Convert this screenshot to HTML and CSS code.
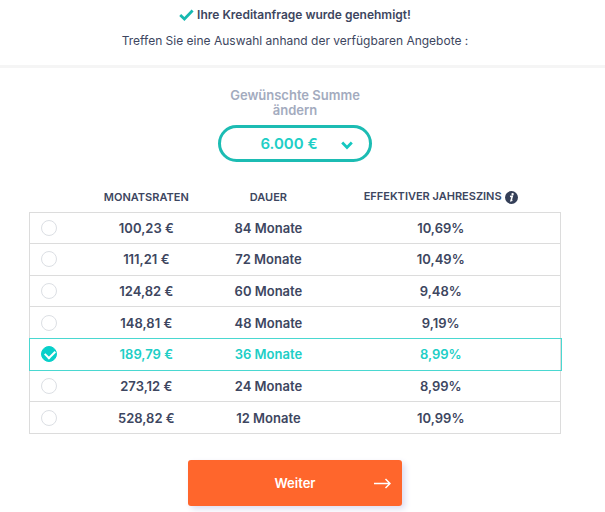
FILE: index.html
```html
<!DOCTYPE html>
<html lang="de">

<head>
  <meta charset="UTF-8">
  <meta name="viewport" content="width=device-width, initial-scale=1.0">
  <title>Kreditangebote</title>
  <link rel="stylesheet" href="styles.css">
</head>

<body>
  <header class="header">
    <h1 class="approved">
      <svg class="approved-icon" width="15" height="12" viewBox="0 0 15 12" fill="none" stroke="#17b9b0" stroke-width="2.8" aria-hidden="true"><path d="M1.2 6 5.4 10 13.6 1.6" /></svg>
      Ihre Kreditanfrage wurde genehmigt!
    </h1>
    <p class="hint">Treffen Sie eine Auswahl anhand der verfügbaren Angebote :</p>
  </header>

  <form class="offers">
    <label class="amount-label" for="amount">Gewünschte Summe ändern</label>
    <div class="amount">
      <select id="amount" class="amount-select">
        <option>6.000 €</option>
      </select>
      <svg class="amount-arrow" width="12" height="9" viewBox="0 0 12 9" fill="none" stroke="#14c8c0" stroke-width="2.8" aria-hidden="true"><path d="M1.2 1.6 6 6.4 10.8 1.6" /></svg>
    </div>

    <table class="table">
      <thead>
        <tr>
          <th class="col-pick"></th>
          <th class="col-rate">MONATSRATEN</th>
          <th class="col-term">DAUER</th>
          <th class="col-interest">
            EFFEKTIVER JAHRESZINS
            <svg class="info" width="13" height="13" viewBox="0 0 13 13" aria-hidden="true"><circle cx="6.5" cy="6.5" r="6.5" fill="#343f58" /><circle cx="7.6" cy="3.1" r="1.2" fill="#fff" /><path d="M5 5.6 7.3 5.2 6 9.7 7.4 9.3" fill="none" stroke="#fff" stroke-width="1.5" /></svg>
          </th>
        </tr>
      </thead>
      <tbody>
        <tr>
          <td><input type="radio" name="offer" id="m84" aria-label="84 Monate"></td>
          <td><label for="m84">100,23 €</label></td>
          <td>84 Monate</td>
          <td>10,69%</td>
        </tr>
        <tr>
          <td><input type="radio" name="offer" id="m72" aria-label="72 Monate"></td>
          <td><label for="m72">111,21 €</label></td>
          <td>72 Monate</td>
          <td>10,49%</td>
        </tr>
        <tr>
          <td><input type="radio" name="offer" id="m60" aria-label="60 Monate"></td>
          <td><label for="m60">124,82 €</label></td>
          <td>60 Monate</td>
          <td>9,48%</td>
        </tr>
        <tr>
          <td><input type="radio" name="offer" id="m48" aria-label="48 Monate"></td>
          <td><label for="m48">148,81 €</label></td>
          <td>48 Monate</td>
          <td>9,19%</td>
        </tr>
        <tr>
          <td><input type="radio" name="offer" id="m36" aria-label="36 Monate" checked></td>
          <td><label for="m36">189,79 €</label></td>
          <td>36 Monate</td>
          <td>8,99%</td>
        </tr>
        <tr>
          <td><input type="radio" name="offer" id="m24" aria-label="24 Monate"></td>
          <td><label for="m24">273,12 €</label></td>
          <td>24 Monate</td>
          <td>8,99%</td>
        </tr>
        <tr>
          <td><input type="radio" name="offer" id="m12" aria-label="12 Monate"></td>
          <td><label for="m12">528,82 €</label></td>
          <td>12 Monate</td>
          <td>10,99%</td>
        </tr>
      </tbody>
    </table>

    <button class="next" type="button">
      <span class="next-text">Weiter</span>
      <svg class="next-arrow" width="17" height="11" viewBox="0 0 17 11" fill="none" stroke="#fff" stroke-width="1.5" aria-hidden="true"><path d="M0 5.5H16M11.5 1 16 5.5 11.5 10" /></svg>
    </button>
  </form>
</body>

</html>
```

FILE: styles.css
```css
* {
  box-sizing: border-box;
  margin: 0;
  padding: 0;
}

body {
  background-color: #fff;
  color: #3d4660;
  font-family: Inter, "Liberation Sans", sans-serif;
  font-size: 13px;
  font-weight: 600;
}

.header {
  padding: 7px 15px 16px 0;
  border-bottom: 3px solid #f5f5f5;
  text-align: center;
}

.approved {
  font-size: 12px;
  font-weight: 600;
  line-height: 16px;
}

.approved-icon {
  vertical-align: -2px;
}

.hint {
  margin-top: 10px;
  font-size: 12px;
  font-weight: 400;
  line-height: 16px;
}

.offers {
  display: flex;
  flex-direction: column;
  align-items: center;
  padding: 20px 44px 6px 29px;
}

.amount-label {
  max-width: 152px;
  color: #a3abbe;
  line-height: 15px;
  text-align: center;
}

.amount {
  position: relative;
  width: 154px;
  margin-top: 7px;
}

.amount-select {
  width: 100%;
  height: 37px;
  padding-right: 12px;
  border: 3px solid #1cbcb3;
  border-radius: 19px;
  background-color: #fff;
  color: #20cec6;
  font: inherit;
  font-size: 15px;
  text-align: center;
  text-align-last: center;
  appearance: none;
}

.amount-arrow {
  position: absolute;
  top: 16px;
  right: 19px;
  pointer-events: none;
}

.table {
  width: 100%;
  height: 252px;
  margin-top: 20px;
  border-collapse: collapse;
  table-layout: fixed;
  text-align: center;
}

.table th {
  height: 30px;
  font-size: 11px;
  font-weight: 600;
  white-space: nowrap;
}

.col-pick {
  width: 9%;
}

.col-rate {
  width: 26%;
}

.col-term {
  width: 20%;
}

.info {
  margin-left: 1px;
  vertical-align: -4px;
}

.table tbody {
  border: 1px solid #dcdcdc;
}

.table tbody tr {
  border-top: 1px solid #dcdcdc;
}

.table tbody tr:has(input:checked) {
  outline: 1px solid #4ad8d1;
  color: #20cec6;
}

.table input {
  display: block;
  width: 16px;
  height: 16px;
  margin-left: 11px;
  border: 1px solid #dcdfe4;
  border-radius: 50%;
  appearance: none;
}

.table input:checked {
  position: relative;
  border-color: #08d0ca;
  background-color: #08d0ca;
}

/* white tick */
.table input:checked::after {
  content: "";
  position: absolute;
  top: 3px;
  left: 3px;
  width: 8px;
  height: 5px;
  border: solid #fff;
  border-width: 0 0 2px 2px;
  transform: rotate(-45deg);
}

.next {
  display: grid;
  grid-template-columns: 1fr auto 1fr;
  align-items: center;
  width: 214px;
  height: 46px;
  margin-top: 26px;
  padding: 0 11px;
  border: 0;
  border-radius: 3px;
  background-color: #ff662c;
  box-shadow: 3px 3px 6px #dcdcf0;
  color: #fff;
  font: inherit;
}

.next-text {
  grid-column: 2;
}

.next-arrow {
  justify-self: end;
}
```
